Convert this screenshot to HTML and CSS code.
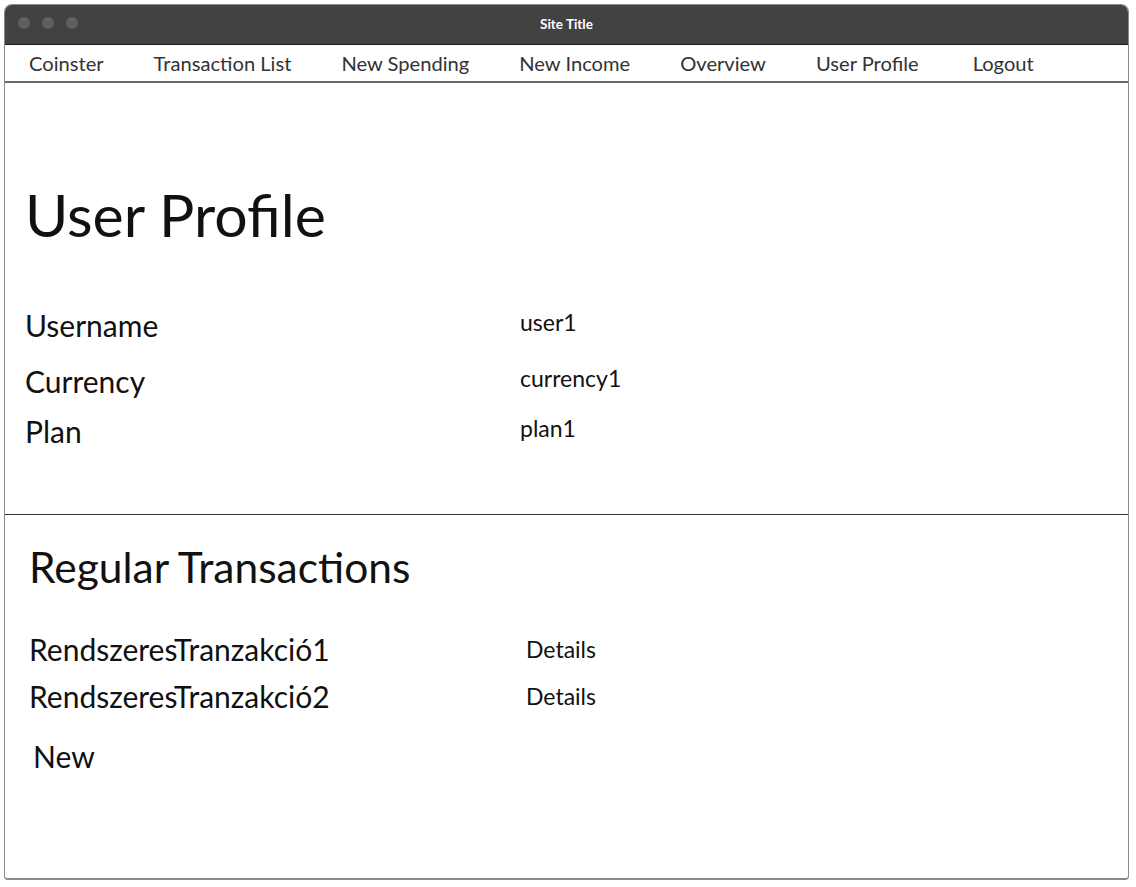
FILE: index.html
```html
<!DOCTYPE html>
<html lang="en">
<head>
<meta charset="utf-8">
<title>User Profile</title>
<link rel="stylesheet" href="styles.css">
</head>
<body>
<div class="window">
  <div class="titlebar">
    <div class="dots"><span class="dot"></span><span class="dot"></span><span class="dot"></span></div>
    <div class="site-title">Site Title</div>
    <div></div>
  </div>
  <nav class="nav">
    <span class="nav-item">Coinster</span>
    <span class="nav-item">Transaction List</span>
    <span class="nav-item">New Spending</span>
    <span class="nav-item">New Income</span>
    <span class="nav-item">Overview</span>
    <span class="nav-item">User Profile</span>
    <span class="nav-item nav-last">Logout</span>
  </nav>
  <section class="profile">
    <h1 class="page-title">User Profile</h1>
    <div class="fields">
      <div class="label">Username</div><div class="value">user1</div>
      <div class="label">Currency</div><div class="value">currency1</div>
      <div class="label">Plan</div><div class="value">plan1</div>
    </div>
  </section>
  <hr class="divider">
  <section class="regular">
    <h2 class="section-title">Regular Transactions</h2>
    <div class="tx-list">
      <div class="label">RendszeresTranzakció1</div><div class="value link">Details</div>
      <div class="label">RendszeresTranzakció2</div><div class="value link">Details</div>
    </div>
    <div class="label new">New</div>
  </section>
</div>
</body>
</html>
```
FILE: styles.css
```css
* { box-sizing: border-box; }
html, body { margin: 0; padding: 0; background: #fff; }
body { font-family: Lato, "Liberation Sans", sans-serif; color: #111; }

.window {
  margin: 4px 0 0 4px;
  width: 1125px;
  height: 876px;
  border: 1px solid #8a8a8a;
  border-bottom-width: 2px;
  border-radius: 8px 8px 4px 4px;
  overflow: hidden;
  background: #fff;
}

.titlebar {
  height: 40px;
  padding-bottom: 2px;
  background: #424242;
  border-bottom: 1px solid #1e1e1e;
  display: grid;
  grid-template-columns: 1fr auto 1fr;
  align-items: center;
}
.dots { display: flex; gap: 12px; padding-left: 13px; margin-bottom: 2px; }
.dot { width: 12px; height: 12px; border-radius: 50%; background: #5f5f5f; }
.site-title { color: #fff; font-weight: 700; font-size: 13.5px; }

.nav {
  height: 38px;
  border-bottom: 2px solid #6a6a6a;
  display: flex;
  align-items: center;
  gap: 50px;
  padding-left: 24px;
}
.nav-item { font-size: 20.15px; color: #333; line-height: 1; }
.nav-last { margin-left: 4px; }

.profile { padding: 102px 0 0 20px; }
.page-title { margin: 0; font-size: 59px; font-weight: 400; line-height: 1; color: #111; }

.fields {
  margin-top: 53px;
  display: grid;
  grid-template-columns: 495px auto;
  grid-template-rows: 56px 56px 44px;
  align-items: center;
}
.label { font-size: 30px; line-height: 1; color: #111; }
.value { font-size: 23px; line-height: 1; color: #111; margin-bottom: 5px; }
.value.link { margin-bottom: 0; }

.divider { margin: 61px 0 0; border: 0; border-top: 1px solid #333; height: 0; }

.regular { padding: 31px 0 0 24px; }
.section-title { margin: 0; font-size: 42.5px; font-weight: 400; line-height: 1; color: #111; }
.tx-list {
  margin-top: 37px;
  display: grid;
  grid-template-columns: 497px auto;
  grid-auto-rows: 47px;
  align-items: center;
}
.new { margin-top: 21px; padding-left: 4px; }
```
